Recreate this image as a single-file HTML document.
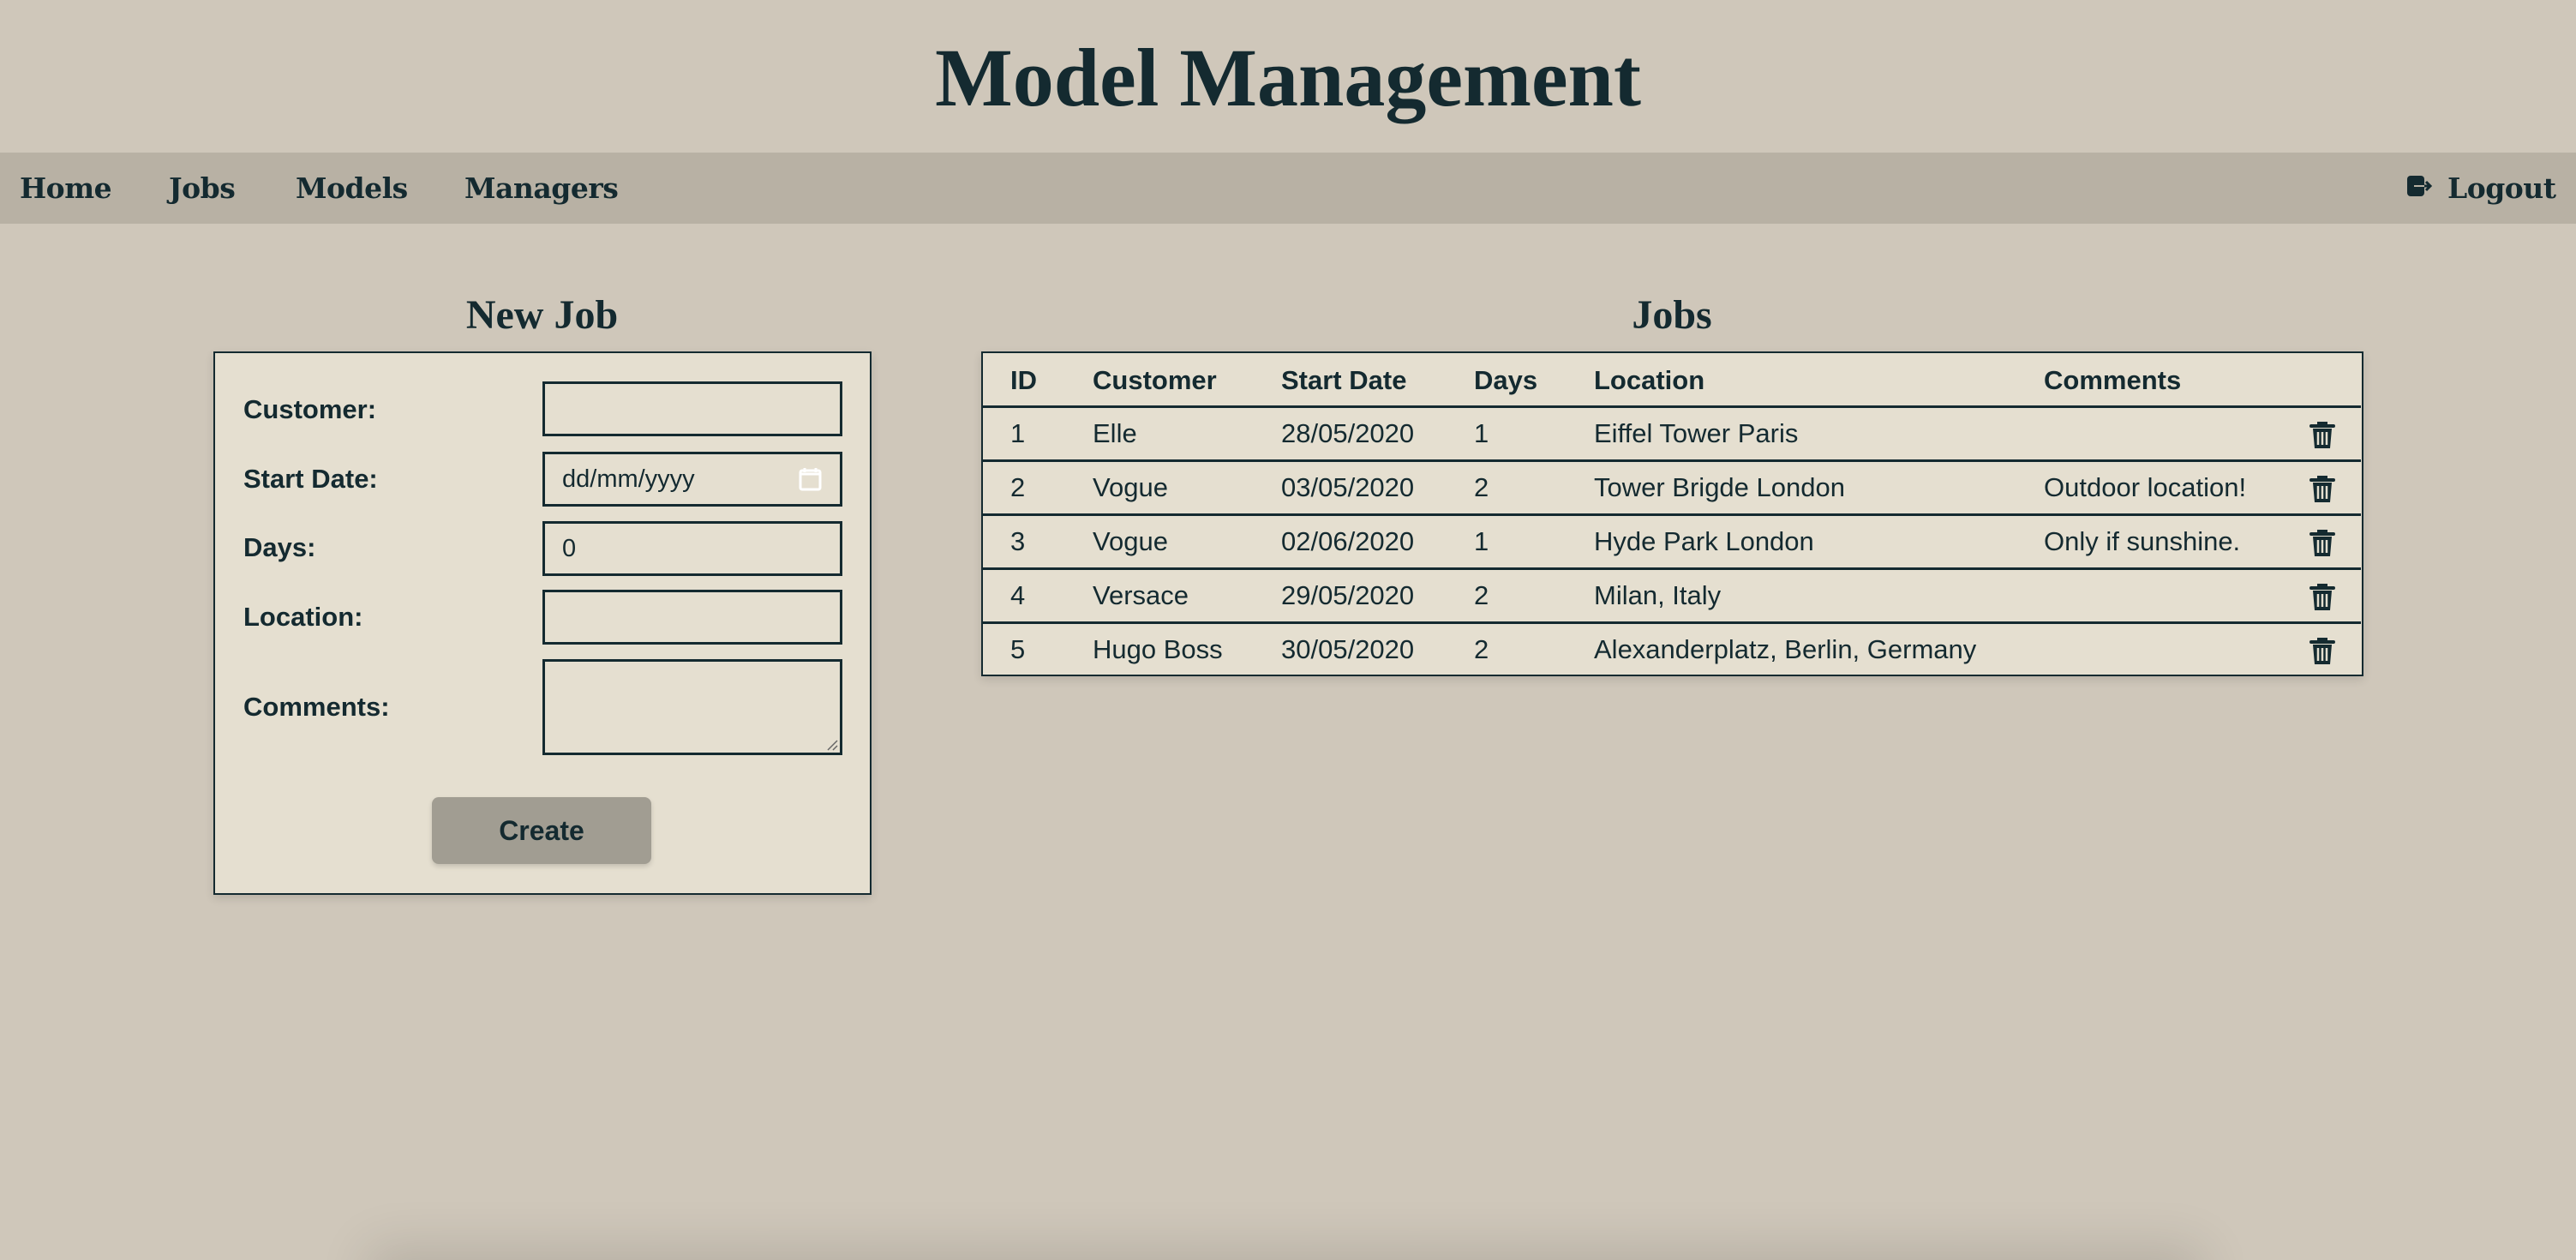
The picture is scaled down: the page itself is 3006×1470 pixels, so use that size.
<!DOCTYPE html>
<html><head><meta charset="utf-8"><style>
*{margin:0;padding:0;box-sizing:border-box}
html,body{width:3006px;height:1470px;overflow:hidden;background:#cfc7ba;color:#142a30;font-family:"Liberation Sans",sans-serif;position:relative}
.a{position:absolute}
.serif{font-family:"Liberation Serif",serif;font-weight:bold}
h1{position:absolute;left:0;width:3006px;top:31px;text-align:center;font:bold 96px "Liberation Serif",serif;line-height:120px}
.nav{position:absolute;left:0;top:178px;width:3006px;height:83px;background:#b8b1a4}
.nav span{position:absolute;top:18px;font:bold 33px "DejaVu Serif",serif;line-height:48px;letter-spacing:-0.5px}
.box{position:absolute;background:#e5dfd0;border:2px solid #142a30;box-shadow:0 4px 10px rgba(0,0,0,.12)}
.lbl{position:absolute;left:284px;font-weight:bold;font-size:31px;line-height:36px}
.inp{position:absolute;left:633px;width:350px;border:3px solid #142a30;font-size:29px;padding-left:20px;line-height:58px}
.btn{position:absolute;left:504px;top:930px;width:256px;height:78px;background:#a19d92;border-radius:8px;font-weight:bold;font-size:32px;text-align:center;line-height:78px;box-shadow:0 3px 6px rgba(0,0,0,.15)}
.row{position:absolute;left:0;width:1608px;height:63px;border-top:3px solid #142a30}
.row span{position:absolute;top:0;line-height:60px;font-size:31px}
.row.h{border-top:none}
.row.h span{font-weight:bold}
.t{position:absolute;left:1548px;top:15px}
</style></head><body>
<h1>Model Management</h1>
<div class="nav">
<span style="left:23px">Home</span>
<span style="left:197px">Jobs</span>
<span style="left:345px">Models</span>
<span style="left:542px">Managers</span>
<svg class="a" style="left:2808px;top:25px" width="32" height="30" viewBox="0 0 32 30"><rect x="1" y="2" width="20" height="24" rx="4" fill="#142a30"/><path d="M9 14H28M23 9l5 5-5 5" stroke="#142a30" stroke-width="3" fill="none"/><path d="M9 14H21" stroke="#b8b1a4" stroke-width="2"/></svg>
<span style="left:2856px">Logout</span>
</div>

<div class="a serif" style="left:249px;width:767px;top:338px;text-align:center;font-size:48px;line-height:60px">New Job</div>
<div class="box" style="left:249px;top:410px;width:768px;height:634px"></div>
<div class="lbl" style="top:460px">Customer:</div>
<div class="lbl" style="top:541px">Start Date:</div>
<div class="lbl" style="top:621px">Days:</div>
<div class="lbl" style="top:702px">Location:</div>
<div class="lbl" style="top:807px">Comments:</div>
<div class="inp" style="top:445px;height:64px"></div>
<div class="inp" style="top:527px;height:64px">dd/mm/yyyy
<svg class="a" style="left:296px;top:14px" width="28" height="30" viewBox="0 0 28 30"><rect x="2" y="5" width="23" height="22" rx="2" fill="none" stroke="#fff" stroke-width="3"/><path d="M2 9h23M7 2v5M20 2v5" stroke="#fff" stroke-width="3"/></svg></div>
<div class="inp" style="top:608px;height:64px">0</div>
<div class="inp" style="top:688px;height:64px"></div>
<div class="inp" style="top:769px;height:112px"><svg class="a" style="right:2px;bottom:2px" width="14" height="14"><path d="M2 13L13 2M8 13L13 8" stroke="#666" stroke-width="1.5"/></svg></div>
<div class="btn">Create</div>

<div class="a serif" style="left:1145px;width:1612px;top:338px;text-align:center;font-size:48px;line-height:60px">Jobs</div>
<div class="box" style="left:1145px;top:410px;width:1613px;height:379px;overflow:hidden">
<div class="row h" style="top:2px;height:61px"><span style="left:32px">ID</span><span style="left:128px">Customer</span><span style="left:348px">Start Date</span><span style="left:573px">Days</span><span style="left:713px">Location</span><span style="left:1238px">Comments</span></div>
<div class="row" style="top:61px"><span style="left:32px">1</span><span style="left:128px">Elle</span><span style="left:348px">28/05/2020</span><span style="left:573px">1</span><span style="left:713px">Eiffel Tower Paris</span><svg class="t" width="30" height="34" viewBox="0 0 30 34"><path d="M2 6h26M11 6V3h8v3" stroke="#142a30" stroke-width="4" fill="none" stroke-linecap="round"/><path d="M4 9h22l-2 23H6z" fill="#142a30"/><path d="M10 13v15M15 13v15M20 13v15" stroke="#e5dfd0" stroke-width="2.5"/></svg></div>
<div class="row" style="top:124px"><span style="left:32px">2</span><span style="left:128px">Vogue</span><span style="left:348px">03/05/2020</span><span style="left:573px">2</span><span style="left:713px">Tower Brigde London</span><span style="left:1238px">Outdoor location!</span><svg class="t" width="30" height="34" viewBox="0 0 30 34"><path d="M2 6h26M11 6V3h8v3" stroke="#142a30" stroke-width="4" fill="none" stroke-linecap="round"/><path d="M4 9h22l-2 23H6z" fill="#142a30"/><path d="M10 13v15M15 13v15M20 13v15" stroke="#e5dfd0" stroke-width="2.5"/></svg></div>
<div class="row" style="top:187px"><span style="left:32px">3</span><span style="left:128px">Vogue</span><span style="left:348px">02/06/2020</span><span style="left:573px">1</span><span style="left:713px">Hyde Park London</span><span style="left:1238px">Only if sunshine.</span><svg class="t" width="30" height="34" viewBox="0 0 30 34"><path d="M2 6h26M11 6V3h8v3" stroke="#142a30" stroke-width="4" fill="none" stroke-linecap="round"/><path d="M4 9h22l-2 23H6z" fill="#142a30"/><path d="M10 13v15M15 13v15M20 13v15" stroke="#e5dfd0" stroke-width="2.5"/></svg></div>
<div class="row" style="top:250px"><span style="left:32px">4</span><span style="left:128px">Versace</span><span style="left:348px">29/05/2020</span><span style="left:573px">2</span><span style="left:713px">Milan, Italy</span><svg class="t" width="30" height="34" viewBox="0 0 30 34"><path d="M2 6h26M11 6V3h8v3" stroke="#142a30" stroke-width="4" fill="none" stroke-linecap="round"/><path d="M4 9h22l-2 23H6z" fill="#142a30"/><path d="M10 13v15M15 13v15M20 13v15" stroke="#e5dfd0" stroke-width="2.5"/></svg></div>
<div class="row" style="top:313px"><span style="left:32px">5</span><span style="left:128px">Hugo Boss</span><span style="left:348px">30/05/2020</span><span style="left:573px">2</span><span style="left:713px">Alexanderplatz, Berlin, Germany</span><svg class="t" width="30" height="34" viewBox="0 0 30 34"><path d="M2 6h26M11 6V3h8v3" stroke="#142a30" stroke-width="4" fill="none" stroke-linecap="round"/><path d="M4 9h22l-2 23H6z" fill="#142a30"/><path d="M10 13v15M15 13v15M20 13v15" stroke="#e5dfd0" stroke-width="2.5"/></svg></div>
</div>
<div class="a" style="left:450px;top:1475px;width:2100px;height:40px;box-shadow:0 0 60px 20px rgba(0,0,0,.12)"></div>
</body></html>
